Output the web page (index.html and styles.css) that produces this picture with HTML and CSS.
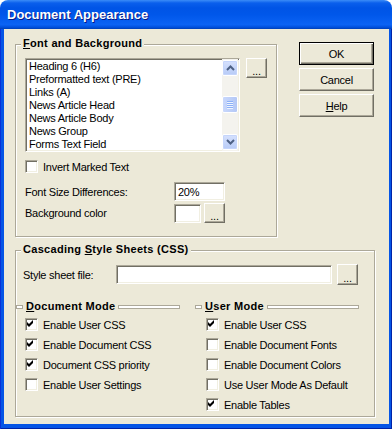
FILE: index.html
```html
<!DOCTYPE html>
<html lang="en">
<head>
    <meta charset="UTF-8">
    <meta name="viewport" content="width=device-width, initial-scale=1.0">
    <title>Document Appearance</title>
    <link rel="stylesheet" href="styles.css">
</head>
<body>
    <div class="window">
        <div class="titlebar">Document Appearance</div>
        <div class="frame">
            <div class="client">
                <div class="top-row">
                    <div class="group group-font">
                        <div class="group-label"><u>F</u>ont and Background</div>
                        <div class="list-row">
                            <div class="listbox">
                                <ul class="list-items">
                                    <li>Heading 6 (H6)</li>
                                    <li>Preformatted text (PRE)</li>
                                    <li>Links (A)</li>
                                    <li>News Article Head</li>
                                    <li>News Article Body</li>
                                    <li>News Group</li>
                                    <li>Forms Text Field</li>
                                </ul>
                                <div class="scrollbar">
                                    <div class="scroll-btn">
                                        <svg width="9" height="6" viewBox="0 0 9 6"><polyline points="1,5 4.5,1.5 8,5" fill="none" stroke="#4d6185" stroke-width="2"/></svg>
                                    </div>
                                    <div class="scroll-track">
                                        <div class="scroll-thumb">
                                            <span class="grip"></span>
                                            <span class="grip"></span>
                                            <span class="grip"></span>
                                            <span class="grip"></span>
                                        </div>
                                    </div>
                                    <div class="scroll-btn">
                                        <svg width="9" height="6" viewBox="0 0 9 6"><polyline points="1,1 4.5,4.5 8,1" fill="none" stroke="#4d6185" stroke-width="2"/></svg>
                                    </div>
                                </div>
                            </div>
                            <button class="btn btn-dots">...</button>
                        </div>

                        <label class="check check-invert">
                            <span class="box"></span>
                            <span>Invert Marked Text</span>
                        </label>

                        <div class="field-row row-size">
                            <span class="field-label">Font Size Differences:</span>
                            <span class="textbox size-box">20%</span>
                        </div>

                        <div class="field-row row-color">
                            <span class="field-label">Background color</span>
                            <span class="textbox swatch"></span>
                            <button class="btn btn-dots">...</button>
                        </div>
                    </div>

                    <div class="dialog-buttons">
                        <button class="btn btn-main btn-default">OK</button>
                        <button class="btn btn-main">Cancel</button>
                        <button class="btn btn-main"><u>H</u>elp</button>
                    </div>
                </div>

                <div class="group group-css">
                    <div class="group-label">Cascading <u>S</u>tyle Sheets (CSS)</div>
                    <div class="field-row row-sheet">
                        <span class="field-label sheet-label">Style sheet file:</span>
                        <span class="textbox sheet-box"></span>
                        <button class="btn btn-dots">...</button>
                    </div>

                    <div class="modes">
                        <div class="mode-col">
                            <div class="mode-head">
                                <span class="etch etch-short"></span>
                                <span class="mode-title"><u>D</u>ocument Mode</span>
                                <span class="etch"></span>
                            </div>
                            <div class="check-list">
                                <label class="check"><span class="box checked"></span><span>Enable User CSS</span></label>
                                <label class="check"><span class="box checked"></span><span>Enable Document CSS</span></label>
                                <label class="check"><span class="box checked"></span><span>Document CSS priority</span></label>
                                <label class="check"><span class="box"></span><span>Enable User Settings</span></label>
                            </div>
                        </div>
                        <div class="mode-col">
                            <div class="mode-head">
                                <span class="etch etch-short"></span>
                                <span class="mode-title"><u>U</u>ser Mode</span>
                                <span class="etch"></span>
                            </div>
                            <div class="check-list check-list-right">
                                <label class="check"><span class="box checked"></span><span>Enable User CSS</span></label>
                                <label class="check"><span class="box"></span><span>Enable Document Fonts</span></label>
                                <label class="check"><span class="box"></span><span>Enable Document Colors</span></label>
                                <label class="check"><span class="box"></span><span>Use User Mode As Default</span></label>
                                <label class="check"><span class="box checked"></span><span>Enable Tables</span></label>
                            </div>
                        </div>
                    </div>
                </div>
            </div>
        </div>
    </div>
</body>
</html>
```

FILE: styles.css
```css
* {
    box-sizing: border-box;
}

body {
    margin: 0;
    padding: 0;
    font-family: "Liberation Sans", Arial, sans-serif;
    font-size: 11px;
    letter-spacing: -0.25px;
    color: #000;
    background-color: #fff;
}

.window {
    width: 392px;
    height: 429px;
    display: flex;
    flex-direction: column;
}

.titlebar {
    height: 29px;
    padding: 7px 0 0 7px;
    border-radius: 8px 8px 0 0;
    background: linear-gradient(to bottom, #3b8cf7 0, #0a5fec 3px, #0054e6 8px, #0057ea 50%, #0b63f4 85%, #0050dd 94%, #003fb5 100%);
    color: #fff;
    font-size: 13px;
    font-weight: bold;
    letter-spacing: 0;
    line-height: 16px;
    text-shadow: 1px 1px #0a1883;
}

.frame {
    flex: 1;
    padding: 0 3px 5px 4px;
    background-color: #0555e6;
    box-shadow: inset 1px 0 #0831d9, inset -1px 0 #0023a8, inset 0 -1px #0023a8;
}

.client {
    height: 100%;
    padding: 15px 0 0 11px;
    background-color: #ece9d8;
}

.top-row {
    display: flex;
    align-items: flex-start;
}

/* group boxes (etched frame) */
.group {
    border: 1px solid #aca899;
    box-shadow: inset 1px 1px #fff, 1px 1px #fff;
}

.group-font {
    width: 262px;
    height: 193px;
    padding-left: 9px;
}

.group-css {
    width: 360px;
    height: 167px;
    margin-top: 13px;
}

.group-label {
    display: table;
    margin: -8px 0 0 -4px;
    padding: 0 2px;
    line-height: 13px;
    font-weight: bold;
    letter-spacing: 0.3px;
    background-color: #ece9d8;
}

.group-css .group-label {
    margin-left: 5px;
}

/* list box */
.list-row {
    display: flex;
    align-items: flex-start;
    margin-top: 8px;
}

.listbox {
    width: 215px;
    height: 94px;
    display: flex;
    background-color: #fff;
    border: 1px solid;
    border-color: #aca899 #fff #fff #aca899;
    box-shadow: inset 1px 1px #716f64, inset -1px -1px #f1efe2;
    overflow: hidden;
}

.list-items {
    flex: 1;
    list-style: none;
    margin: 0;
    padding: 1px 0 0 3px;
}

.list-items li {
    line-height: 13px;
    white-space: nowrap;
}

.scrollbar {
    width: 16px;
    display: flex;
    flex-direction: column;
    margin: 0 1px 0 0;
    padding: 1px 0;
    background-color: #f4f3ee;
}

.scroll-btn {
    height: 16px;
    display: flex;
    justify-content: center;
    align-items: center;
    border: 1px solid #fff;
    border-radius: 2px;
    background: linear-gradient(to bottom, #d6e1fd, #b7cbf7);
    box-shadow: inset 0 0 0 1px #c5d5fb;
}

.scroll-track {
    flex: 1;
    padding-top: 20px;
}

.scroll-thumb {
    height: 17px;
    display: flex;
    flex-direction: column;
    align-items: center;
    justify-content: center;
    gap: 1px;
    border: 1px solid #fff;
    border-radius: 2px;
    background: linear-gradient(to right, #c9d8fc, #b4c8f6);
}

.grip {
    width: 6px;
    height: 1px;
    background-color: #8cb0f8;
    box-shadow: 0 1px #eef4fe;
}

/* buttons */
.btn {
    font-family: inherit;
    font-size: 11px;
    letter-spacing: inherit;
    color: #000;
    background-color: #ece9d8;
    border: 1px solid;
    border-color: #fff #716f64 #716f64 #fff;
    box-shadow: inset -1px -1px #aca899;
    padding: 0;
    margin: 0;
}

.btn-dots {
    width: 21px;
    height: 20px;
    margin-left: 6px;
    padding-top: 5px;
    line-height: 10px;
}

.dialog-buttons {
    display: flex;
    flex-direction: column;
    gap: 3px;
    margin: -2px 0 0 22px;
}

.btn-main {
    width: 75px;
    height: 23px;
}

.btn-default {
    border: 1px solid #000;
    box-shadow: inset 1px 1px #fff, inset -1px -1px #716f64, inset -2px -2px #aca899;
}

/* check boxes */
.check {
    display: flex;
    align-items: center;
    gap: 5px;
    height: 13px;
    white-space: nowrap;
}

.check-invert {
    margin-top: 8px;
}

.box {
    width: 13px;
    height: 13px;
    flex: none;
    background-color: #fff;
    border: 1px solid;
    border-color: #aca899 #fff #fff #aca899;
    box-shadow: inset 1px 1px #716f64, inset -1px -1px #f1efe2;
}

.box.checked {
    background: #fff url("data:image/svg+xml,%3Csvg xmlns='http://www.w3.org/2000/svg' width='11' height='11'%3E%3Cpolygon points='2,4 4,6 8,2 8,5 4,9 2,7' fill='%23000'/%3E%3C/svg%3E") no-repeat -1px -1px;
}

/* text fields */
.field-row {
    display: flex;
    align-items: center;
}

.field-label {
    width: 149px;
    flex: none;
}

.textbox {
    display: block;
    height: 19px;
    padding: 3px 0 0 3px;
    background-color: #fff;
    border: 1px solid;
    border-color: #aca899 #fff #fff #aca899;
    box-shadow: inset 1px 1px #716f64, inset -1px -1px #f1efe2;
    line-height: 13px;
}

.row-size {
    margin-top: 9px;
}

.size-box {
    width: 51px;
}

.row-color {
    margin-top: 2px;
}

.swatch {
    width: 27px;
}

.row-color .btn-dots {
    margin-left: 3px;
}

.row-sheet {
    margin-top: 8px;
    padding-left: 7px;
}

.sheet-label {
    width: 93px;
}

.sheet-box {
    width: 216px;
}

.row-sheet .btn-dots {
    height: 21px;
    margin-left: 5px;
    padding-top: 6px;
}

/* document / user mode */
.modes {
    display: grid;
    grid-template-columns: 164px 164px;
    gap: 15px;
    margin-top: 15px;
}

.mode-head {
    display: flex;
    align-items: center;
    gap: 3px;
    height: 13px;
}

.mode-title {
    font-weight: bold;
    letter-spacing: 0.3px;
    line-height: 13px;
}

.etch {
    flex: 1;
    height: 4px;
    background-color: #fff;
    border: 1px solid #aca899;
}

.etch-short {
    flex: none;
    width: 7px;
}

.check-list {
    display: flex;
    flex-direction: column;
    gap: 7px;
    margin-top: 5px;
    padding-left: 9px;
}

.check-list-right {
    padding-left: 11px;
}
```
